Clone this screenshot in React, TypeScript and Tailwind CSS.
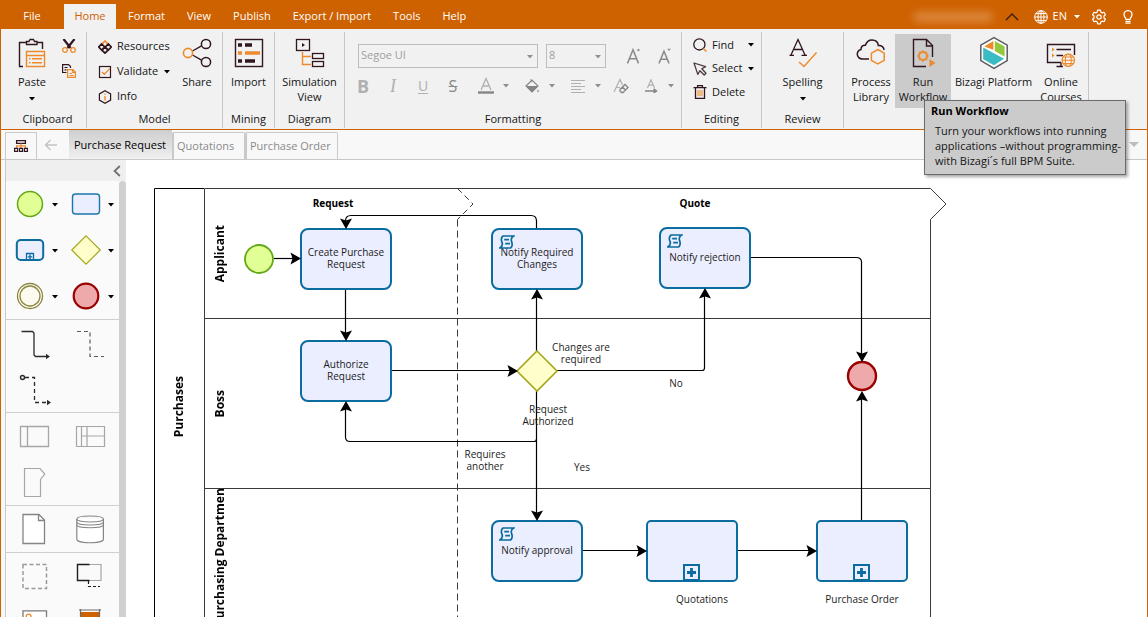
import React, { useState } from "react";

const DARK = "#2f1620";
const ORANGE = "#ee8a2c";
const BLUE = "#0b6c9f";

type Children = { children: React.ReactNode };

function Icon({ size = 30, className = "", children }: Children & { size?: number; className?: string }) {
  return (
    <svg width={size} height={size} viewBox={`0 0 ${size} ${size}`} fill="none" className={`shrink-0 ${className}`} aria-hidden="true">
      {children}
    </svg>
  );
}

function Caret({ className = "text-black" }: { className?: string }) {
  return (
    <svg width="6" height="4" viewBox="0 0 6 4" className={`shrink-0 ${className}`} aria-hidden="true">
      <path d="M0 0H6L3 3.6Z" fill="currentColor" />
    </svg>
  );
}

/* ---------- Top bar ---------- */

const menus = ["File", "Home", "Format", "View", "Publish", "Export / Import", "Tools", "Help"];

function TopBar() {
  return (
    <header className="flex h-[29px] items-end bg-[#ce6100] text-white">
      <nav className="flex items-end pl-[9px]">
        {menus.map((m) => (
          <button
            key={m}
            type="button"
            className={
              m === "Home"
                ? "mr-px h-[25px] w-[52px] bg-[#f1f1f1] text-[#ce6100]"
                : m === "File"
                  ? "mr-[10px] h-[25px] w-11"
                  : "h-[25px] px-[11px]"
            }
          >
            {m}
          </button>
        ))}
      </nav>
      <div className="ml-auto flex h-[25px] items-center pr-3.5">
        <div className="mr-3 h-2.5 w-20 rounded-full bg-[#e39a5c] opacity-70 blur-xs" />
        <button type="button" aria-label="Collapse ribbon" className="mr-[15px]">
          <svg width="14" height="8" viewBox="0 0 14 8" fill="none">
            <path d="M1 7L7 1L13 7" stroke="#3c1d10" strokeWidth="1.4" />
          </svg>
        </button>
        <button type="button" className="mr-[11px] flex items-center gap-[5px]">
          <Icon size={14}>
            <g stroke="#fff" strokeWidth="1">
              <circle cx="7" cy="7" r="6.3" />
              <ellipse cx="7" cy="7" rx="3" ry="6.3" />
              <path d="M.7 7H13.3M7 .7V13.3M1.6 3.6H12.4M1.6 10.4H12.4" />
            </g>
          </Icon>
          <span className="mr-0.5">EN</span>
          <Caret className="text-white" />
        </button>
        <button type="button" aria-label="Settings" className="mr-4">
          <Icon size={16}>
            <g stroke="#fff" strokeWidth="1.2" strokeLinejoin="round">
              <path d="M6.6 1.2H9.4L9.8 3.1L11.2 3.9L13 3.3L14.4 5.7L13 7V9L14.4 10.3L13 12.7L11.2 12.1L9.8 12.9L9.4 14.8H6.6L6.2 12.9L4.8 12.1L3 12.7L1.6 10.3L3 9V7L1.6 5.7L3 3.3L4.8 3.9L6.2 3.1Z" />
              <circle cx="8" cy="8" r="2.2" />
            </g>
          </Icon>
        </button>
        <button type="button" aria-label="Tips">
          <svg width="10" height="14" viewBox="0 0 10 14" fill="none">
            <path d="M3 9.3C3 7.8 1 7 1 4.6A4 4 0 0 1 9 4.6C9 7 7 7.8 7 9.3Z" stroke="#fff" strokeWidth="1.3" />
            <path d="M2.4 11.3H7.6M2.4 13.2H7.6" stroke="#fff" strokeWidth="1.3" />
          </svg>
        </button>
      </div>
    </header>
  );
}

/* ---------- Ribbon icons ---------- */

const PasteIcon = () => (
  <Icon>
    <path d="M6 28.5H2.5V4.5H9M20 4.5H25.5V11" stroke={DARK} strokeWidth="1.4" />
    <path d="M9.5 6.5V3.5H12L13 1.5H16.5L17.5 3.5H20V6.5Z" stroke={DARK} strokeWidth="1.3" />
    <path d="M9.5 13.5H27.5V28.5H9.5ZM9.5 17.5H27.5M12 20.8H13.6M15 20.8H25M12 24.8H13.6M15 24.8H25" stroke={ORANGE} strokeWidth="1.4" />
  </Icon>
);

const ScissorsIcon = () => (
  <Icon size={14}>
    <path d="M1.5 0L8.6 9M12.5 0L5.4 9" stroke={DARK} strokeWidth="2.2" />
    <circle cx="3" cy="11" r="2.3" stroke={ORANGE} strokeWidth="1.3" />
    <circle cx="11" cy="11" r="2.3" stroke={ORANGE} strokeWidth="1.3" />
  </Icon>
);

const CopyIcon = () => (
  <Icon size={14}>
    <path d="M4.5 8.5H.6V.6H6.5L8.5 2.6V4M2.5 3.5H5.5M2.5 5.8H4.5" stroke={DARK} strokeWidth="1.2" />
    <path d="M5.6 5.6H11L13.4 8V13.4H5.6ZM10.5 5.6V8.4H13.4M7.4 9.5H10M7.4 11.5H11.6" stroke={ORANGE} strokeWidth="1.2" />
  </Icon>
);

const ResourcesIcon = () => (
  <Icon size={14}>
    <path d="M7 1L10 4L7 7L4 4Z" stroke={ORANGE} strokeWidth="1.7" />
    <path d="M3.6 4L6.6 7L3.6 10L.8 7ZM10.4 4L13.2 7L10.4 10L7.4 7ZM7 7.2L10 10.2L7 13.2L4 10.2Z" stroke={DARK} strokeWidth="1.7" />
  </Icon>
);

const ValidateIcon = () => (
  <Icon size={14}>
    <rect x="1.5" y="1.5" width="11" height="11" stroke={DARK} strokeWidth="1.2" />
    <path d="M4 7L6.3 9.3L12 3.4" stroke={ORANGE} strokeWidth="1.3" />
  </Icon>
);

const InfoIcon = () => (
  <Icon size={14}>
    <path d="M7 .8L12.6 3.9V10.1L7 13.2L1.4 10.1V3.9Z" stroke={DARK} strokeWidth="1.2" />
    <path d="M7 3.4V4.8M7 6V10.6" stroke={ORANGE} strokeWidth="1.4" />
  </Icon>
);

const ShareIcon = () => (
  <Icon>
    <path d="M10.5 13L19.5 7.8M10.5 17L19.5 22.2" stroke={DARK} strokeWidth="1.4" />
    <circle cx="6" cy="15" r="4.6" stroke={ORANGE} strokeWidth="1.6" />
    <circle cx="24" cy="6" r="4.6" stroke={DARK} strokeWidth="1.5" />
    <circle cx="24" cy="24" r="4.6" stroke={DARK} strokeWidth="1.5" />
  </Icon>
);

const ImportIcon = () => (
  <Icon>
    <rect x="1.5" y="1.5" width="27" height="27" stroke={DARK} strokeWidth="1.4" />
    <path d="M4 7H8M11 7H18M4 23H8M11 23H21" stroke={DARK} strokeWidth="3.6" />
    <path d="M4 15H8M11 15H26" stroke={ORANGE} strokeWidth="3.6" />
  </Icon>
);

const SimulationIcon = () => (
  <Icon>
    <rect x="1.5" y="1.5" width="13" height="11" stroke={DARK} strokeWidth="1.3" />
    <path d="M7 5L10 7L7 9Z" fill={DARK} />
    <path d="M7.5 14V26.5H16M7.5 18.5H16" stroke={ORANGE} strokeWidth="1.4" />
    <rect x="17.5" y="15.5" width="11" height="5" stroke={DARK} strokeWidth="1.3" />
    <rect x="17.5" y="23.5" width="11" height="5" stroke={DARK} strokeWidth="1.3" />
  </Icon>
);

const SpellingIcon = () => (
  <Icon>
    <path d="M3 17L10 1.5L17 17M5.6 11.5H14.6M1.5 17.3H6M13.5 17.3H19" stroke={DARK} strokeWidth="1.3" />
    <path d="M11 24L16 28.5L28.5 14.5" stroke={ORANGE} strokeWidth="1.4" />
  </Icon>
);

const LibraryIcon = () => (
  <Icon>
    <path d="M13 21H6.5C3.5 21 1.3 19 1.3 16.2C1.3 13.8 3 12 5 11.5C4.8 8.6 7 6.8 9.4 7.2C10.4 4 13 2 16 2C19.6 2 22 4.4 22.4 7.6C25.6 7.2 28 9.4 28 12" stroke={DARK} strokeWidth="1.5" />
    <path d="M21.8 11.5L28.2 15.2V22.4L21.8 26L15.4 22.4V15.2Z" stroke={ORANGE} strokeWidth="1.5" />
  </Icon>
);

const RunIcon = () => (
  <Icon>
    <path d="M18 28.5H5.5V1.5H18.5L24.5 7.5V19M18.5 1.5V8H24.5" stroke={DARK} strokeWidth="1.4" />
    <circle cx="15" cy="18" r="4" stroke={ORANGE} strokeWidth="2" />
    <path d="M15 12.5V14M15 22V23.5M9.5 18H11M19 18H20.5M11.2 14.2L12.2 15.2M17.8 20.8L18.8 21.8M11.2 21.8L12.2 20.8M17.8 15.2L18.8 14.2" stroke={ORANGE} strokeWidth="2" />
    <path d="M21.5 21L27.5 25L21.5 29Z" fill={ORANGE} />
  </Icon>
);

const PlatformIcon = () => (
  <Icon className="overflow-visible">
    <path d="M15 -.4L28.2 7.2V22.6L15 30.4L1.8 22.6V7.2Z" fill="#fff" stroke="#5c5c62" strokeWidth="1.5" />
    <path d="M14.4 3V11.8L5.2 8.4Z" fill="#f08a24" />
    <path d="M15.8 3L25.6 8.6V18.4L15.8 13Z" fill="#93c83d" />
    <path d="M4.2 9.6L25 20.8L15 27.2L4.2 21.2Z" fill="#3bbcc4" />
  </Icon>
);

const CoursesIcon = () => (
  <Icon>
    <path d="M15 24.5H1.5V6.5H28.5V17M15 24.5V28.5M10.5 28.5H17" stroke={DARK} strokeWidth="1.4" />
    <path d="M10.5 11.5H25M10.5 17.5H17" stroke={DARK} strokeWidth="1.4" />
    <path d="M6 9.5L8.6 11.5L6 13.5ZM6 15.5L8.6 17.5L6 19.5Z" fill={ORANGE} />
    <circle cx="22.3" cy="22.3" r="6.2" fill="#f1f1f1" stroke={ORANGE} strokeWidth="1.2" />
    <ellipse cx="22.3" cy="22.3" rx="3" ry="6.2" stroke={ORANGE} strokeWidth="1.1" />
    <path d="M16 22.3H28.6M17 19H27.6M17 25.6H27.6" stroke={ORANGE} strokeWidth="1.1" />
  </Icon>
);

const FindIcon = () => (
  <Icon size={14}>
    <circle cx="6.4" cy="6.4" r="5.6" stroke={DARK} strokeWidth="1.3" />
    <path d="M10.4 10.6L13.4 13.6" stroke={ORANGE} strokeWidth="1.4" />
  </Icon>
);

const SelectIcon = () => (
  <Icon size={14}>
    <path d="M1 1L12.6 4.6L8.8 6.8L13 11.2L11.2 13L6.9 8.7L4.8 12.4Z" stroke="#4a3a40" strokeWidth="1.3" strokeLinejoin="round" />
  </Icon>
);

const DeleteIcon = () => (
  <Icon size={14}>
    <path d="M.5 2.6H13.5M4.6 2.4V.7H9.4V2.4M2.5 2.6V13.3H11.5V2.6" stroke={DARK} strokeWidth="1.3" />
    <path d="M5 5V11.2M7 5V11.2M9 5V11.2" stroke={ORANGE} strokeWidth="1.1" />
  </Icon>
);

/* ---------- Ribbon ---------- */

function Group({ label, className, children }: Children & { label: string; className: string }) {
  return (
    <section className={`flex h-24 shrink-0 flex-col border-r border-[#c6c6c6] ${className}`}>
      <div className="flex flex-1">{children}</div>
      <h2 className="pb-px text-center leading-4">{label}</h2>
    </section>
  );
}

function BigButton({ icon, lines, className = "", caret = false }: { icon: React.ReactNode; lines: string[]; className?: string; caret?: boolean }) {
  return (
    <button type="button" className={`mt-0.5 flex h-[74px] flex-col items-center whitespace-nowrap pt-1 leading-[15px] ${className}`}>
      {icon}
      <span className="mt-1.5">{lines[0]}</span>
      {lines[1] && <span>{lines[1]}</span>}
      {caret && (
        <span className="flex h-[15px] items-center pt-1">
          <Caret />
        </span>
      )}
    </button>
  );
}

function RowButton({ icon, label, className, caret = false }: { icon: React.ReactNode; label: string; className: string; caret?: boolean }) {
  return (
    <button type="button" className={`flex items-center whitespace-nowrap ${className}`}>
      {icon}
      <span className="ml-[5px] flex-1 text-left">{label}</span>
      {caret && <Caret />}
    </button>
  );
}

function Picker({ label, value, className }: { label: string; value: string; className: string }) {
  return (
    <label className={`relative block h-6 ${className}`}>
      <select aria-label={label} className="h-6 w-full appearance-none border border-[#bdbdbd] bg-transparent pb-0.5 pl-[2px] text-[#a0a0a0]" defaultValue={value}>
        <option>{value}</option>
      </select>
      <span className="pointer-events-none absolute top-[11px] right-[5px]">
        <Caret className="text-[#8f8f8f]" />
      </span>
    </label>
  );
}

function Tool({ label, children }: Children & { label: string }) {
  return (
    <button type="button" aria-label={label} className="flex h-5 w-[30px] items-center justify-center">
      {children}
    </button>
  );
}

function ToolMenu({ label, children }: Children & { label: string }) {
  return (
    <div className="flex items-center px-[3px]">
      <Tool label={label}>{children}</Tool>
      <button type="button" aria-label={`${label} options`} className="flex h-5 w-2.5 items-center justify-center">
        <Caret className="text-[#8f8f8f]" />
      </button>
    </div>
  );
}

function Formatting() {
  return (
    <div className="flex flex-col">
      <div className="mt-3 flex pl-[13px]">
        <Picker label="Font family" value="Segoe UI" className="mr-2 w-[180px]" />
        <Picker label="Font size" value="8" className="mr-3 w-[60px]" />
        <button type="button" aria-label="Increase font size" className="w-[31px]">
          <Icon size={18} className="mx-auto">
            <path d="M2.5 16.4L8 2.8L13.5 16.4M4.5 11.8H11.5" stroke="#8a8a8a" strokeWidth="1.5" />
            <path d="M11.6 3.8L13.4 1.6L15.2 3.8Z" fill="#8a8a8a" />
          </Icon>
        </button>
        <button type="button" aria-label="Decrease font size" className="w-[31px]">
          <Icon size={18} className="mx-auto">
            <path d="M3 16.4L8 4.2L13 16.4M4.8 12.2H11.2" stroke="#8a8a8a" strokeWidth="1.5" />
            <path d="M11.2 1.8L13 4L14.8 1.8Z" fill="#8a8a8a" />
          </Icon>
        </button>
      </div>
      <div className="mt-2 flex pl-[3px] text-[#b0b0b0]">
        <Tool label="Bold">
          <span className="font-['Open_Sans',sans-serif] text-lg leading-5 font-bold">B</span>
        </Tool>
        <Tool label="Italic">
          <span className="font-['Liberation_Serif',serif] text-lg leading-5 italic">I</span>
        </Tool>
        <Tool label="Underline">
          <span className="border-b border-[#b0b0b0] text-sm leading-[14px]">U</span>
        </Tool>
        <Tool label="Strikethrough">
          <span className="text-base leading-5 text-[#8a8a8a] line-through decoration-1">S</span>
        </Tool>
        <ToolMenu label="Font color">
          <Icon size={18}>
            <path d="M4 13L9 1.5L14 13M5.8 9H12.2" stroke="#b0b0b0" strokeWidth="1.3" />
            <path d="M1 15.5H17" stroke="#858585" strokeWidth="2.4" />
          </Icon>
        </ToolMenu>
        <ToolMenu label="Fill color">
          <Icon size={16}>
            <path d="M2 8L8 2L14 8L8 14Z" stroke="#858585" strokeWidth="1.2" />
            <path d="M2 8H14L8 14ZM6 1L8 2L8 5Z" fill="#858585" />
            <circle cx="14" cy="13" r="1.2" fill="#b0b0b0" />
          </Icon>
        </ToolMenu>
        <ToolMenu label="Align">
          <Icon size={14}>
            <path d="M0 1.5H14M0 4.5H10M0 7.5H14M0 10.5H10M0 13.5H14" stroke="#b0b0b0" />
          </Icon>
        </ToolMenu>
        <Tool label="Clear formatting">
          <Icon size={16}>
            <path d="M1 14L7 1.5L9.5 7M3.4 9.5H7" stroke="#b0b0b0" strokeWidth="1.2" />
            <path d="M7 11.5L12 6.5L15 9.5L10 14.5H8.5L7 13ZM9.4 9L12.6 12.2" stroke="#858585" strokeWidth="1.3" />
          </Icon>
        </Tool>
        <Tool label="Text direction">
          <Icon size={14}>
            <path d="M3.5 9L7 .8L10.5 9M4.8 6.2H9.2" stroke="#b0b0b0" strokeWidth="1.2" />
            <path d="M1 12H12M9.6 9.8L12.4 12L9.6 14" stroke="#858585" strokeWidth="1.6" />
          </Icon>
        </Tool>
        <span className="flex h-5 w-2.5 items-center justify-center">
          <Caret className="text-[#8f8f8f]" />
        </span>
      </div>
    </div>
  );
}

function Ribbon() {
  return (
    <div className="flex border-b border-[#ce6100] bg-[#f1f1f1] pt-[3px] pb-px">
      <Group label="Clipboard" className="w-[86px] pl-2">
        <BigButton icon={<PasteIcon />} lines={["Paste"]} caret className="w-[46px]" />
        <div className="flex flex-1 flex-col items-center gap-[11px] pt-[7px] pr-1">
          <button type="button" aria-label="Cut">
            <ScissorsIcon />
          </button>
          <button type="button" aria-label="Copy">
            <CopyIcon />
          </button>
        </div>
      </Group>
      <Group label="Model" className="w-[136px]">
        <div className="w-[85px] pt-0.5 pl-[11px]">
          <RowButton icon={<ResourcesIcon />} label="Resources" className="h-[25px] w-[74px]" />
          <RowButton icon={<ValidateIcon />} label="Validate" caret className="h-[25px] w-[72px]" />
          <RowButton icon={<InfoIcon />} label="Info" className="h-[25px] w-[74px]" />
        </div>
        <BigButton icon={<ShareIcon />} lines={["Share"]} className="flex-1" />
      </Group>
      <Group label="Mining" className="w-[52px]">
        <BigButton icon={<ImportIcon />} lines={["Import"]} className="flex-1" />
      </Group>
      <Group label="Diagram" className="w-[70px]">
        <BigButton icon={<SimulationIcon />} lines={["Simulation", "View"]} className="flex-1" />
      </Group>
      <Group label="Formatting" className="w-[337px]">
        <Formatting />
      </Group>
      <Group label="Editing" className="w-20">
        <div className="pt-px pl-[11px]">
          <RowButton icon={<FindIcon />} label="Find" caret className="h-6 w-[61px]" />
          <RowButton icon={<SelectIcon />} label="Select" caret className="h-[23px] w-[61px]" />
          <RowButton icon={<DeleteIcon />} label="Delete" className="h-6 w-[61px]" />
        </div>
      </Group>
      <Group label="Review" className="w-[82px]">
        <BigButton icon={<SpellingIcon />} lines={["Spelling"]} caret className="flex-1" />
      </Group>
      <Group label="" className="w-[245px]">
        <BigButton icon={<LibraryIcon />} lines={["Process", "Library"]} className="ml-[3px] w-12" />
        <div className="relative">
          <BigButton icon={<RunIcon />} lines={["Run", "Workflow"]} className="w-14 bg-[#cbcbcb]" />
          <div role="tooltip" className="absolute top-[68px] left-[29px] z-20 w-[202px] border border-[#6b6b6b] bg-[#cbcbcb] pt-0.5 pb-1.5 pl-1.5 shadow-[2px_2px_3px_rgba(0,0,0,0.35)]">
            <p className="text-[11px] leading-4 font-bold text-black">Run Workflow</p>
            <p className="mt-1 pl-1 leading-[15px] whitespace-nowrap">
              Turn your workflows into running
              <br />
              applications –without programming-
              <br />
              with Bizagi´s full BPM Suite.
            </p>
          </div>
        </div>
        <BigButton icon={<PlatformIcon />} lines={["Bizagi Platform"]} className="w-[85px]" />
        <BigButton icon={<CoursesIcon />} lines={["Online", "Courses"]} className="w-[50px]" />
      </Group>
    </div>
  );
}

/* ---------- Document tabs ---------- */

function DocumentTabs() {
  const [active, setActive] = useState("Purchase Request");
  const tabs = [
    { name: "Purchase Request", width: "w-[103px]" },
    { name: "Quotations", width: "w-[73px]" },
    { name: "Purchase Order", width: "w-[93px]" },
  ];
  return (
    <div className="flex h-[30px] items-end border-b border-[#c9c9c9] bg-[#f8f8f8] pl-1">
      <button type="button" aria-label="Diagram tree" className="flex h-[27px] w-8 items-center justify-center border border-b-0 border-[#c9c9c9]">
        <Icon size={14}>
          <path d="M2.6 1.6H11.4V4.4H2.6Z" stroke={DARK} strokeWidth="1.3" />
          <path d="M7 4.6V9M2.6 9V6.8H11.4V9" stroke={ORANGE} strokeWidth="1.2" />
          <path d="M.6 9.4H3.6V12.4H.6ZM5.5 9.4H8.5V12.4H5.5ZM10.4 9.4H13.4V12.4H10.4Z" stroke={DARK} strokeWidth="1.2" />
        </Icon>
      </button>
      <button type="button" aria-label="Back" className="flex h-[27px] w-8 items-center justify-center pr-1 pb-px">
        <Icon size={14}>
          <path d="M13 7H1.5M6.5 2L1.5 7L6.5 12" stroke="#c2c2c2" strokeWidth="1.3" />
        </Icon>
      </button>
      <div role="tablist" className="flex items-end">
        {tabs.map((t) => (
          <button
            key={t.name}
            type="button"
            role="tab"
            aria-selected={t.name === active}
            onClick={() => setActive(t.name)}
            className={`${t.width} text-left ${
              t.name === active
                ? "h-[29px] bg-linear-to-b from-[#cfcfcf] via-[#dedede] to-[#f1f1f1] pt-0.5 pl-[5px] text-black"
                : "h-[27px] rounded-t-xs border border-b-0 border-l-2 border-[#c9c9c9] pl-[3px] text-[#8a8a8a]"
            }`}
          >
            {t.name}
          </button>
        ))}
      </div>
      <button type="button" aria-label="More diagrams" className="mr-2 mb-3 ml-auto">
        <svg width="10" height="5" viewBox="0 0 10 5">
          <path d="M0 0H10L5 5Z" fill="#bcbcbc" />
        </svg>
      </button>
    </div>
  );
}

/* ---------- Palette ---------- */

function Cell({ label, caret = false, children }: Children & { label: string; caret?: boolean }) {
  return (
    <button type="button" aria-label={label} className="h-[46px] w-14">
      <svg width="56" height="46" viewBox="0 0 56 46" fill="none">
        {children}
        {caret && <path d="M46 22H52L49 25.4Z" fill="#000" />}
      </svg>
    </button>
  );
}

function Palette() {
  return (
    <aside className="flex w-[121px] shrink-0 flex-col border-l border-[#c9c9c9]">
      <div className="flex h-[21px] shrink-0 items-center justify-end bg-[#efefef] pr-[5px]">
        <button type="button" aria-label="Collapse palette">
          <svg width="8" height="12" viewBox="0 0 8 12" fill="none">
            <path d="M6.8 1L1.6 6L6.8 11" stroke="#707070" strokeWidth="1.8" />
          </svg>
        </button>
      </div>
      <div className="flex min-h-0 flex-1">
        <div className="w-[113px] overflow-hidden bg-[#fafafa]">
          <div className="flex flex-wrap">
            <Cell label="Start event" caret>
              <circle cx="24" cy="23" r="12.5" fill="#e2ff95" stroke="#62a716" strokeWidth="1.5" />
            </Cell>
            <Cell label="Task" caret>
              <rect x="10.5" y="13" width="27" height="20" rx="3" fill="#ebeeff" stroke="#1b76ac" strokeWidth="1.4" />
            </Cell>
            <Cell label="Sub-process" caret>
              <rect x="10.8" y="13" width="26.4" height="20" rx="4" fill="#ebeeff" stroke={BLUE} strokeWidth="2" />
              <path d="M20.5 33V26.5H27.5V33M24 27.6V32M21.8 29.8H26.2" stroke={BLUE} strokeWidth="1.3" />
            </Cell>
            <Cell label="Gateway" caret>
              <path d="M24 8.8L38.2 23L24 37.2L9.8 23Z" fill="#ffffcc" stroke="#a6a61d" strokeWidth="1.2" />
            </Cell>
            <Cell label="Intermediate event" caret>
              <circle cx="24" cy="23" r="12.5" fill="#fdfbf0" stroke="#8b8640" strokeWidth="1.3" />
              <circle cx="24" cy="23" r="10" stroke="#8b8640" strokeWidth="1.3" />
            </Cell>
            <Cell label="End event" caret>
              <circle cx="24" cy="23" r="12.3" fill="#eeaaaa" stroke="#990000" strokeWidth="2.2" />
            </Cell>
          </div>
          <div className="flex flex-wrap border-t border-[#cfcfcf]">
            <Cell label="Sequence flow">
              <path d="M15.5 11.5H26.5L28 13V35L29.5 36.5H41" stroke="#2b2b2b" strokeWidth="1.3" />
              <path d="M40 33.8L44 36.5L40 39.2Z" fill="#2b2b2b" />
            </Cell>
            <Cell label="Association">
              <path d="M15 11.5H28V36.5H42" stroke="#5a5a5a" strokeWidth="1.2" strokeDasharray="4 3" />
            </Cell>
            <Cell label="Message flow">
              <circle cx="16.5" cy="11.5" r="2" stroke="#2b2b2b" strokeWidth="1.4" />
              <path d="M19 11.5H28.5V36.5H41" stroke="#2b2b2b" strokeWidth="1.3" strokeDasharray="4 3" />
              <path d="M41 33.8L45 36.5L41 39.2Z" fill="#2b2b2b" />
            </Cell>
          </div>
          <div className="flex flex-wrap border-t border-[#cfcfcf]">
            <Cell label="Pool">
              <path d="M14.5 13.5H42.5V33.5H14.5ZM21.5 13.5V33.5" stroke="#a6a6a6" strokeWidth="1.3" />
            </Cell>
            <Cell label="Lane">
              <path d="M14.5 13.5H42.5V33.5H14.5ZM19.5 13.5V33.5M25 13.5V33.5M19.5 23H42.5" stroke="#a6a6a6" strokeWidth="1.2" />
            </Cell>
            <Cell label="Milestone">
              <path d="M18.5 9.5H34L38.8 15L34.5 20.5V37.5H18.5Z" stroke="#a6a6a6" strokeWidth="1.2" />
            </Cell>
          </div>
          <div className="flex flex-wrap border-t border-[#cfcfcf]">
            <Cell label="Data object">
              <path d="M17 8.5H33L38.5 14V37.5H17ZM32.5 8.5V14.5H38.5" fill="#fff" stroke="#858585" strokeWidth="1.3" />
            </Cell>
            <Cell label="Data store">
              <path d="M14.8 13V33C14.8 38 41.4 38 41.4 33V13" fill="#fff" stroke="#858585" strokeWidth="1.2" />
              <path d="M14.8 13C14.8 9 41.4 9 41.4 13C41.4 17 14.8 17 14.8 13ZM14.8 16C14.8 20 41.4 20 41.4 16M14.8 18.8C14.8 22.8 41.4 22.8 41.4 18.8" stroke="#858585" strokeWidth="1.1" />
            </Cell>
          </div>
          <div className="flex flex-wrap border-t border-[#cfcfcf]">
            <Cell label="Group">
              <rect x="17" y="11.5" width="23.5" height="24" stroke="#9a9a9a" strokeWidth="1.5" strokeDasharray="4 2.5" />
            </Cell>
            <Cell label="Annotation">
              <path d="M27 11.5H39V27.5H27" stroke="#a6a6a6" strokeWidth="1.2" />
              <path d="M27.5 11.5H15.5V27.5H27.5" stroke="#1d1d1d" strokeWidth="1.4" />
              <path d="M26.5 28V33.5H38" stroke="#1d1d1d" strokeWidth="1.2" strokeDasharray="3 2" />
            </Cell>
            <Cell label="Image">
              <path d="M17 11.8H40.5V30H17Z" fill="#fff" stroke="#7a7a7a" strokeWidth="1.3" />
              <circle cx="22.6" cy="17.5" r="2.4" stroke={ORANGE} strokeWidth="1.3" />
            </Cell>
            <Cell label="Header">
              <path d="M19 13H37V30H19Z" fill="#ce6100" />
              <path d="M17 11H39M18.5 10V30M37.5 10V30" stroke="#6b6b6b" strokeWidth="1.2" />
            </Cell>
          </div>
        </div>
        <div className="flex-1 rounded-t-full bg-[#d0d0d0]" />
      </div>
    </aside>
  );
}

/* ---------- Diagram ---------- */

type TaskNode = { x: number; y: number; text?: string; kind: "task" | "script" | "sub" };

const nodes: TaskNode[] = [
  { x: 146, y: 40, text: "Create Purchase\nRequest", kind: "task" },
  { x: 146, y: 152, text: "Authorize\nRequest", kind: "task" },
  { x: 337, y: 40, text: "Notify Required\nChanges", kind: "script" },
  { x: 505, y: 39, text: "Notify rejection", kind: "script" },
  { x: 337, y: 332, text: "Notify approval", kind: "script" },
  { x: 492, y: 332, kind: "sub" },
  { x: 662, y: 332, kind: "sub" },
];

const labels = [
  { x: 427, y: 165, text: "Changes are\nrequired" },
  { x: 522, y: 195, text: "No" },
  { x: 394, y: 227, text: "Request\nAuthorized" },
  { x: 331, y: 272, text: "Requires\nanother" },
  { x: 428, y: 279, text: "Yes" },
  { x: 548, y: 411, text: "Quotations" },
  { x: 708, y: 411, text: "Purchase Order" },
];

const flows = [
  "M120 70.5H140",
  "M191.5 102V146",
  "M382.5 40V33Q382.5 27.5 377 27.5H197Q191.5 27.5 191.5 33V34",
  "M238 182.5H357",
  "M382.5 163V108",
  "M403 182.5H548Q550.5 182.5 550.5 180V107",
  "M382.5 203V326",
  "M382.5 251Q382.5 253.5 380 253.5H196Q191.5 253.5 191.5 249V220",
  "M597 69.5H702Q707.5 69.5 707.5 74V167",
  "M429 362.5H486",
  "M584 362.5H656",
  "M707.5 332V209",
];

const heads = [
  { x: 147, y: 70.5, turn: 0 },
  { x: 192, y: 153, turn: 90 },
  { x: 192, y: 41, turn: 90 },
  { x: 364, y: 183, turn: 0 },
  { x: 383, y: 101, turn: -90 },
  { x: 551, y: 100, turn: -90 },
  { x: 383, y: 333, turn: 90 },
  { x: 192, y: 213, turn: -90 },
  { x: 708, y: 174, turn: 90 },
  { x: 493, y: 363, turn: 0 },
  { x: 663, y: 363, turn: 0 },
  { x: 708, y: 203, turn: -90 },
];

function Task({ node }: { node: TaskNode }) {
  return (
    <div
      className={`absolute flex h-[62px] w-[92px] items-center justify-center border-2 border-[#0b6c9f] bg-[#ebeeff] pb-0.5 text-center leading-3 whitespace-pre ${
        node.kind === "sub" ? "rounded-[5px]" : "rounded-lg"
      }`}
      style={{ left: node.x, top: node.y }}
    >
      {node.kind === "script" && (
        <svg width="16" height="14" viewBox="0 0 16 14" fill="none" className="absolute top-[5px] left-[6px]">
          <path d="M4 1H14.6C12 2.6 11.8 4.4 12.6 6.6C13.6 9.4 13.4 11.6 11.6 13H.8C3.6 11.2 3.8 9.4 3 7.4C2 5 2 2.6 4 1Z" stroke={BLUE} strokeWidth="1.7" />
          <path d="M5.2 4.6H10M6.2 8.6H11" stroke={BLUE} strokeWidth="1.7" />
        </svg>
      )}
      {node.text}
      {node.kind === "sub" && (
        <svg width="17" height="17" viewBox="0 0 17 17" fill="none" className="absolute bottom-[-1px] left-[35px]">
          <rect x="1" y="1" width="15" height="15" stroke={BLUE} strokeWidth="2" />
          <path d="M8.5 4V13M4 8.5H13" stroke={BLUE} strokeWidth="2.8" />
        </svg>
      )}
    </div>
  );
}

function LaneTitle({ className, children }: Children & { className: string }) {
  return (
    <div className={`absolute flex w-5 justify-center overflow-hidden ${className}`}>
      <span className="shrink-0 rotate-180 text-[12px] leading-5 font-bold whitespace-nowrap text-black [writing-mode:vertical-rl]">{children}</span>
    </div>
  );
}

function Diagram() {
  return (
    <main className="relative min-w-0 flex-1 overflow-hidden bg-white">
      <div className="absolute top-7 left-7 text-[10px] text-[#1c1c1c]">
        <svg width="800" height="440" viewBox="0 0 800 440" fill="none" className="overflow-visible">
          <g stroke="#3a3a3a">
            <path d="M50.5 .5H776.5M50.5 130.5H776.5M50.5 300.5H776.5M776.5 31.5V440M50.5 .5V440" />
            <path d="M776.5 .5L792 16L776.5 31.5" />
            <path d="M303.5 .5L319 16L303.5 31.5" strokeDasharray="6 4" />
            <path d="M303.5 31.5V440" strokeDasharray="7 4" />
          </g>
          <path d="M50 .5H.5V440" stroke="#000" />
          {flows.map((d) => (
            <path key={d} d={d} stroke="#000" strokeWidth="1.2" />
          ))}
          <circle cx="105" cy="71" r="14" fill="#e2ff95" stroke="#62a716" strokeWidth="1.8" />
          <circle cx="708" cy="188" r="14" fill="#eeaaaa" stroke="#990000" strokeWidth="2.4" />
          <path d="M383 163L403 183L383 203L363 183Z" fill="#ffffcc" stroke="#a6a61d" strokeWidth="1.6" />
        </svg>
        {nodes.map((n) => (
          <Task key={`${n.x}-${n.y}`} node={n} />
        ))}
        <svg width="800" height="440" viewBox="0 0 800 440" className="absolute top-0 left-0">
          {heads.map((h) => (
            <path key={`${h.x}-${h.y}`} d="M0 0L-10.5 -6L-8.5 0L-10.5 6Z" transform={`translate(${h.x} ${h.y}) rotate(${h.turn})`} fill="#000" />
          ))}
        </svg>
        {labels.map((l) => (
          <p key={l.text} className="absolute -translate-x-1/2 -translate-y-1/2 text-center leading-3 whitespace-pre" style={{ left: l.x, top: l.y }}>
            {l.text}
          </p>
        ))}
        <h3 className="absolute top-[7px] left-[59px] w-60 text-center leading-4 font-bold text-black">Request</h3>
        <h3 className="absolute top-[7px] left-[421px] w-60 text-center leading-4 font-bold text-black">Quote</h3>
        <LaneTitle className="top-0 left-[15px] h-[438px] items-center">Purchases</LaneTitle>
        <LaneTitle className="top-px left-[56px] h-[129px] items-center">Applicant</LaneTitle>
        <LaneTitle className="top-[131px] left-[56px] h-[169px] items-center">Boss</LaneTitle>
        <LaneTitle className="top-[301px] left-[56px] h-[137px] items-end">Purchasing Department</LaneTitle>
      </div>
    </main>
  );
}

export default function App() {
  return (
    <div className="flex h-screen min-w-[1100px] flex-col overflow-hidden border-x border-[#ce6100] bg-[#f8f8f8] font-['Open_Sans','Noto_Sans',sans-serif] text-[11px] text-[#151515]">
      <TopBar />
      <Ribbon />
      <DocumentTabs />
      <div className="flex min-h-0 flex-1 pl-1">
        <Palette />
        <Diagram />
      </div>
    </div>
  );
}
